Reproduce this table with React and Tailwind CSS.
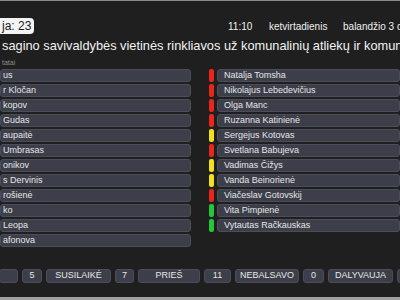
const leftNames = [
  'us',
  'r Kločan',
  'kopov',
  'Gudas',
  'aupaitė',
  'Umbrasas',
  'onikov',
  's Dervinis',
  'rošienė',
  'ko',
  'Leopa',
  'afonova',
];

const rightNames = [
  { name: 'Natalja Tomsha', vote: 'red' },
  { name: 'Nikolajus Lebedevičius', vote: 'red' },
  { name: 'Olga Manc', vote: 'red' },
  { name: 'Ruzanna Katinienė', vote: 'red' },
  { name: 'Sergejus Kotovas', vote: 'yellow' },
  { name: 'Svetlana Babujeva', vote: 'red' },
  { name: 'Vadimas Čižys', vote: 'yellow' },
  { name: 'Vanda Beinorienė', vote: 'yellow' },
  { name: 'Viačeslav Gotovskij', vote: 'red' },
  { name: 'Vita Pimpienė', vote: 'green' },
  { name: 'Vytautas Račkauskas', vote: 'green' },
];

const voteColors = {
  red: 'bg-[#e8261c]',
  yellow: 'bg-[#f2e01c]',
  green: 'bg-[#22c83a]',
};

const totals = [
  { text: '', w: 'w-[19px]' },
  { text: '5', w: 'w-[20px]' },
  { text: 'SUSILAIKĖ', w: 'w-[65px]' },
  { text: '7', w: 'w-[19px]' },
  { text: 'PRIEŠ', w: 'w-[62px]' },
  { text: '11', w: 'w-[27px]' },
  { text: 'NEBALSAVO', w: 'w-[64px]' },
  { text: '0', w: 'w-[21px]' },
  { text: 'DALYVAUJA', w: 'w-[65px]' },
  { text: '', w: 'w-[20px]' },
];

function Row({ children, className = '' }) {
  return (
    <div
      className={`h-[13px] flex items-center bg-[#3c3f4a] border border-[#4b4e58] rounded-[3px] text-[9px] text-[#e6e6e6] whitespace-nowrap overflow-hidden ${className}`}
    >
      {children}
    </div>
  );
}

export default function App() {
  return (
    <div
      className="w-[400px] h-[300px] bg-[#1f1f1f] border-t border-b-[3px] border-t-[#8a8a8a] border-b-[#a0a0a0] overflow-hidden flex flex-col"
      style={{ fontFamily: '"Liberation Sans", Arial, sans-serif' }}
    >
      {/* Header */}
      <div className="flex items-center mt-[17px] h-[16px] whitespace-nowrap">
        <div className="w-[35px] h-[16px] bg-[#f4f4f4] rounded-r-[4px] flex items-center pl-[2px] text-[12px] text-[#1a1a1a]">
          ja: 23
        </div>
        <div className="ml-[194px] flex items-center text-[10px] text-[#f0f0f0] overflow-hidden">
          <span className="w-[41px] shrink-0">11:10</span>
          <span className="w-[74px] shrink-0">ketvirtadienis</span>
          <span>balandžio 3 d.</span>
        </div>
      </div>

      {/* Title */}
      <div className="mt-[4px] pl-[2px] text-[12.8px] leading-[16px] text-[#f2f2f2] whitespace-nowrap overflow-hidden">
        sagino savivaldybės vietinės rinkliavos už komunalinių atliekų ir komunalinių
      </div>

      <div className="pl-[2px] mt-[4px] text-[7px] leading-[10px] text-[#8c8c8c]">tatai</div>

      {/* Members */}
      <div className="flex mt-[1px]">
        <div className="w-[191px] flex flex-col gap-[2px]">
          {leftNames.map((n) => (
            <Row key={n} className="pl-[2px]">
              {n}
            </Row>
          ))}
        </div>
        <div className="flex-1 ml-[18px] flex flex-col gap-[2px]">
          {rightNames.map((m) => (
            <div key={m.name} className="flex gap-[3px]">
              <div className={`w-[5px] h-[13px] rounded-[2px] ${voteColors[m.vote]}`} />
              <Row className="flex-1 pl-[6px]">{m.name}</Row>
            </div>
          ))}
        </div>
      </div>

      {/* Totals */}
      <div className="mt-auto mb-[14px] flex gap-[4px] ml-[-1px]">
        {totals.map((t, i) => (
          <div
            key={i}
            className={`${t.w} shrink-0 h-[14px] flex items-center justify-center bg-[#3c3f4a] border border-[#4b4e58] rounded-[3px] text-[9px] text-[#e6e6e6]`}
          >
            {t.text}
          </div>
        ))}
      </div>
    </div>
  );
}
